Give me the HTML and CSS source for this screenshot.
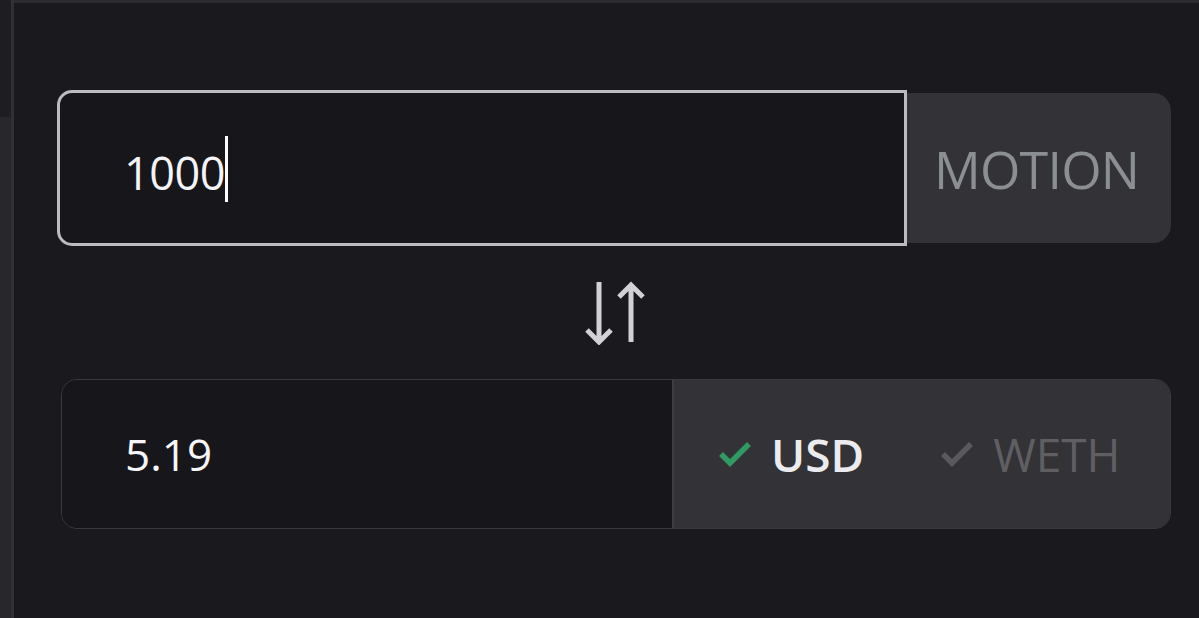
FILE: index.html
```html
<!DOCTYPE html>
<html lang="en">
<head>
  <meta charset="UTF-8">
  <meta name="viewport" content="width=device-width, initial-scale=1.0">
  <title>Convert</title>
  <link rel="stylesheet" href="styles.css">
</head>
<body>
  <div class="layout">
    <aside class="sidebar">
      <div class="sidebar-top"></div>
      <div class="sidebar-rest"></div>
    </aside>

    <main class="panel">
      <div class="amount-row">
        <div class="amount-input">
          <span class="amount-value">1000</span><span class="caret"></span>
        </div>
        <div class="token-label">MOTION</div>
      </div>

      <div class="swap-row">
        <svg class="swap-icon" viewBox="0 0 60 64" width="60" height="64">
          <path d="M14 1 V61 M2 49 L14 61 L26 49" />
          <path d="M46 4 V61 M34 16 L46 4 L58 16" />
        </svg>
      </div>

      <div class="result-row">
        <div class="result-value">5.19</div>
        <div class="currency-options">
          <div class="currency active">
            <svg class="check" viewBox="0 0 34 30" width="34" height="30"><path d="M3 15 L12 24 L31 5" /></svg>
            <span>USD</span>
          </div>
          <div class="currency">
            <svg class="check" viewBox="0 0 34 30" width="34" height="30"><path d="M3 15 L12 24 L31 5" /></svg>
            <span>WETH</span>
          </div>
        </div>
      </div>
    </main>
  </div>
</body>
</html>
```

FILE: styles.css
```css
* {
  box-sizing: border-box;
}
body {
  margin: 0;
  background: #1a191e;
  font-family: 'Open Sans', 'Noto Sans', sans-serif;
  color: #f2f2f5;
}
.layout {
  display: flex;
  height: 618px;
}
.sidebar {
  flex: none;
  width: 14px;
  border-right: 3px solid #313035;
  display: flex;
  flex-direction: column;
}
.sidebar-top {
  height: 117px;
  background: #1e1d22;
}
.sidebar-rest {
  flex: 1;
  background: #28272c;
}
.panel {
  flex: 1;
  min-width: 0;
  border-top: 3px solid #2c2b30;
  padding: 87px 28px 0 43px;
}

/* top: amount + token */
.amount-row {
  display: flex;
  align-items: center;
  height: 156px;
}
.amount-input {
  flex: 1;
  height: 156px;
  border: 3px solid #bcbcc0;
  border-radius: 15px 0 0 15px;
  background: #17161b;
  padding-left: 64px;
  display: flex;
  align-items: center;
  font-size: 45px;
  letter-spacing: -0.5px;
  color: #f4f4f8;
}
.amount-value {
  position: relative;
  top: 4px;
}
.caret {
  width: 3px;
  height: 66px;
  background: #ffffff;
  position: relative;
  top: 1px;
}
.token-label {
  flex: none;
  width: 264px;
  height: 150px;
  background: #333236;
  border-radius: 0 18px 18px 0;
  display: flex;
  align-items: center;
  padding-left: 27px;
  font-size: 52px;
  letter-spacing: -0.8px;
  color: #8b8e93;
}

/* swap arrows */
.swap-row {
  height: 133px;
  display: flex;
  align-items: center;
  justify-content: center;
}
.swap-icon {
  margin-left: 2px;
  margin-top: 1px;
}
.swap-icon path {
  fill: none;
  stroke: #d2d2d6;
  stroke-width: 5;
}

/* bottom: result + currency */
.result-row {
  margin-left: 4px;
  height: 150px;
  border: 1px solid #3b3a3f;
  border-radius: 16px;
  overflow: hidden;
  display: flex;
}
.result-value {
  flex: none;
  width: 612px;
  background: #17161b;
  border-right: 2px solid #3e3d42;
  padding-left: 63px;
  display: flex;
  align-items: center;
  font-size: 44px;
  color: #f6f6f8;
}
.currency-options {
  flex: 1;
  background: #333236;
  display: flex;
  align-items: center;
  padding-left: 44px;
  gap: 76px;
}
.currency {
  display: flex;
  align-items: center;
  gap: 19px;
  font-size: 46px;
  color: #5f5f63;
}
.currency.active {
  color: #ececee;
  font-weight: 600;
}
.check path {
  fill: none;
  stroke: #5a5a5e;
  stroke-width: 5.5;
}
.currency.active .check path {
  stroke: #2f9b62;
}
```
